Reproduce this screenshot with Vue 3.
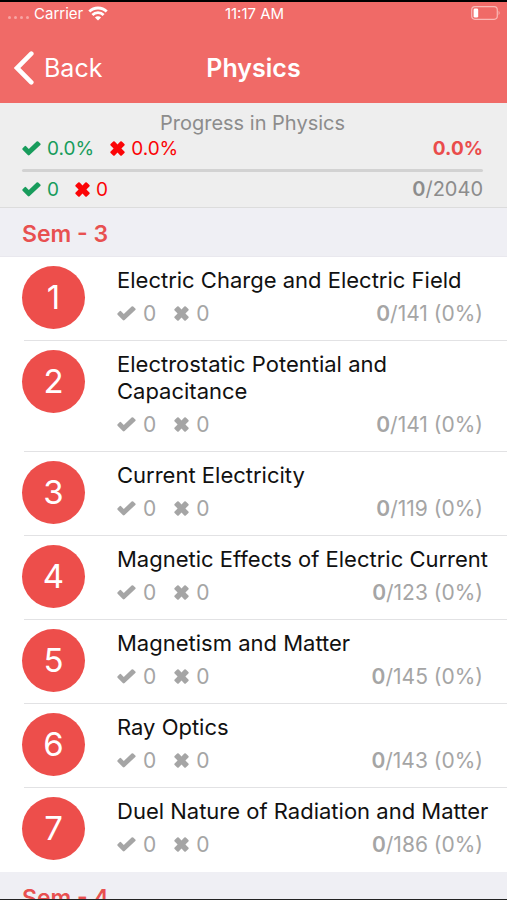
<template>
  <div class="screen">
    <header class="top">
      <div class="status-bar">
        <div class="carrier">
          <span class="dots"><i v-for="n in 4" :key="n"></i></span>
          <span>Carrier</span>
          <svg class="wifi" viewBox="0 0 20 15" aria-hidden="true">
            <path d="M1.3 5.6a12.3 12.3 0 0 1 17.4 0M4.4 9a7.9 7.9 0 0 1 11.2 0" />
            <path class="wifi-dot" d="M10 14.6L6.9 11.6a4.4 4.4 0 0 1 6.2 0z" />
          </svg>
        </div>
        <span class="time">11:17 AM</span>
        <svg class="battery" viewBox="0 0 30 14" aria-hidden="true">
          <rect class="case" x="0.7" y="0.7" width="25.6" height="12.6" rx="3.2" />
          <rect class="level" x="2.6" y="2.4" width="4.6" height="9.2" rx="1.4" />
          <path class="cap" d="M27.6 4.8q2 2.2 0 4.4z" />
        </svg>
      </div>
      <nav class="nav-bar">
        <button class="back" type="button">
          <svg viewBox="0 0 20 34" aria-hidden="true">
            <path d="M17.3 2.7L3 17l14.3 14.3" />
          </svg>
          <span>Back</span>
        </button>
        <h1>Physics</h1>
      </nav>
    </header>

    <section class="summary">
      <h2>Progress in Physics</h2>
      <div class="line">
        <span class="mark right"><svg class="check" viewBox="0 0 19 15"><path :d="checkPath" /></svg>0.0%</span>
        <span class="mark wrong"><svg class="cross" viewBox="2 0 15 15"><path :d="crossPath" /></svg>0.0%</span>
        <strong class="percent">0.0%</strong>
      </div>
      <div class="bar"><div class="fill" :style="{ width: progress + '%' }"></div></div>
      <div class="line">
        <span class="mark right"><svg class="check" viewBox="0 0 19 15"><path :d="checkPath" /></svg>0</span>
        <span class="mark wrong"><svg class="cross" viewBox="2 0 15 15"><path :d="crossPath" /></svg>0</span>
        <span class="total"><b>0</b>/2040</span>
      </div>
    </section>

    <main class="list">
      <section v-for="sem in semesters" :key="sem.name">
        <h3 class="sem-name">{{ sem.name }}</h3>
        <ul v-if="sem.chapters.length">
          <li v-for="(chapter, index) in sem.chapters" :key="chapter.title" class="chapter">
            <span class="number">{{ index + 1 }}</span>
            <div class="info">
              <h4>{{ chapter.title }}</h4>
              <div class="line stats">
                <span class="mark"><svg class="check" viewBox="0 0 19 15"><path :d="checkPath" /></svg>0</span>
                <span class="mark"><svg class="cross" viewBox="2 0 15 15"><path :d="crossPath" /></svg>0</span>
                <span class="total"><b>0</b>/{{ chapter.total }} (0%)</span>
              </div>
            </div>
          </li>
        </ul>
      </section>
    </main>
  </div>
</template>

<script setup>
import { ref } from 'vue';

const checkPath = 'M2.6 5.2L0.6 7.2q-.7.8 0 1.5L5.8 14q.9.8 1.8 0L18.3 3.9q.7-.8 0-1.5L16.2.5q-.8-.7-1.6 0L6.8 8 4.1 5.2q-.8-.7-1.5 0z';
const crossPath = 'M5.2.5L2.6 3q-.7.8 0 1.5l3 3-3 3q-.7.8 0 1.5l2.6 2.5q.7.7 1.5 0l2.8-2.9 2.8 2.9q.8.7 1.5 0l2.6-2.5q.7-.7 0-1.5l-3-3 3-3q.7-.7 0-1.5L13.8.5q-.7-.7-1.5 0L9.5 3.4 6.7.5Q5.9-.2 5.2.5z';

const progress = ref(0);

const semesters = ref([
  {
    name: 'Sem - 3',
    chapters: [
      { title: 'Electric Charge and Electric Field', total: 141 },
      { title: 'Electrostatic Potential and Capacitance', total: 141 },
      { title: 'Current Electricity', total: 119 },
      { title: 'Magnetic Effects of Electric Current', total: 123 },
      { title: 'Magnetism and Matter', total: 145 },
      { title: 'Ray Optics', total: 143 },
      { title: 'Duel Nature of Radiation and Matter', total: 186 },
    ],
  },
  { name: 'Sem - 4', chapters: [] },
]);
</script>

<style>
body {
  margin: 0;
}
</style>

<style scoped>
.screen {
  display: flex;
  flex-direction: column;
  height: 100vh;
  box-sizing: border-box;
  border-top: 2px solid #000;
  border-bottom: 1px solid #222;
  overflow: hidden;
  background: #fff;
  font-family: Inter, "Liberation Sans", sans-serif;
  color: #111;
}

h1, h2, h3, h4, ul {
  margin: 0;
  padding: 0;
  font-weight: 400;
}

.top {
  flex: none;
  background: #f06a67;
  color: #fff;
}

.status-bar {
  display: grid;
  grid-template-columns: 1fr auto 1fr;
  align-items: center;
  height: 22px;
  padding: 0 6px 0 8px;
  font-size: 15px;
}

.carrier {
  display: flex;
  align-items: center;
  gap: 5px;
}

.dots {
  display: flex;
  gap: 3px;
  padding-top: 9px;
}

.dots i {
  width: 3px;
  height: 3px;
  border-radius: 50%;
  background: #f7a5a3;
}

.wifi {
  width: 20px;
  height: 15px;
  fill: none;
  stroke: #fff;
  stroke-width: 2.8;
}

.wifi .wifi-dot {
  fill: #fff;
  stroke: none;
}

.battery {
  justify-self: end;
  width: 30px;
  height: 14px;
}

.battery .case {
  fill: none;
  stroke: #f9b8b5;
  stroke-width: 1.2;
}

.battery .level {
  fill: #fff;
}

.battery .cap {
  fill: #f9b8b5;
}

.nav-bar {
  display: grid;
  grid-template-columns: 1fr auto 1fr;
  align-items: center;
  height: 79px;
  padding: 9px 14px 0;
  box-sizing: border-box;
}

.back {
  display: flex;
  align-items: center;
  justify-self: start;
  gap: 10px;
  padding: 0;
  border: 0;
  background: none;
  color: #fff;
  font: inherit;
  font-size: 25px;
  cursor: pointer;
}

.back svg {
  width: 20px;
  height: 34px;
  fill: none;
  stroke: #fff;
  stroke-width: 4.6;
  stroke-linecap: round;
}

.nav-bar h1 {
  font-size: 25px;
  font-weight: 600;
}

.summary {
  flex: none;
  padding: 8px 24px 5px 22px;
  border-bottom: 1px solid #dcdcdc;
  background: #eee;
  font-size: 20px;
  line-height: 25px;
  color: #8c8c8c;
}

.summary h2 {
  font-size: 20px;
  text-align: center;
}

.line {
  display: flex;
  align-items: center;
  gap: 16px;
}

.mark {
  display: flex;
  align-items: center;
  gap: 6px;
}

.summary .mark,
.percent {
  font-size: 19px;
}

.mark svg {
  height: 15px;
  fill: currentColor;
}

.mark .check {
  width: 19px;
}

.mark .cross {
  width: 15px;
}

.right {
  color: #189c5c;
}

.wrong {
  color: #fb0406;
}

.percent,
.total {
  margin-left: auto;
}

.percent {
  font-weight: 700;
  color: #ea4c4b;
}

.total b {
  font-weight: 600;
}

.bar {
  height: 3px;
  margin: 8px 0 5px;
  border-radius: 2px;
  background: #d2d2d2;
}

.fill {
  height: 100%;
  background: #ee4d4b;
}

.list {
  flex: 1;
  min-height: 0;
  overflow-y: auto;
  scrollbar-width: none;
}

.sem-name {
  padding: 12px 22px 8px;
  border-bottom: 1px solid #e9e8ee;
  background: #efeff4;
  font-size: 23px;
  line-height: 28px;
  font-weight: 600;
  color: #e85050;
}

ul {
  list-style: none;
}

.chapter {
  display: flex;
  gap: 32px;
  position: relative;
  padding: 9px 8px 0 22px;
}

.chapter:not(:last-child)::after {
  content: "";
  position: absolute;
  left: 24px;
  right: 0;
  bottom: 0;
  height: 1px;
  background: #e2e2e4;
}

.number {
  flex: none;
  width: 63px;
  height: 63px;
  border-radius: 50%;
  background: #ed4e4b;
  color: #fff;
  font-size: 33px;
  line-height: 63px;
  text-align: center;
}

.info {
  flex: 1;
  min-width: 0;
  padding: 1px 0 14px;
  line-height: 27px;
}

.info h4 {
  font-size: 22px;
}

.stats {
  gap: 18px;
  margin: 6px 16px 0 0;
  font-size: 21px;
  color: #a5a5a5;
}

.stats .mark {
  gap: 7px;
}
</style>
